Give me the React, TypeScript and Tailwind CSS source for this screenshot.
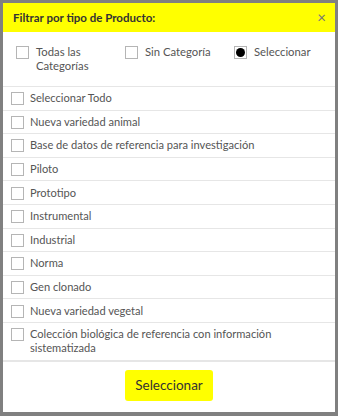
import React from "react";

const items = [
  "Seleccionar Todo",
  "Nueva variedad animal",
  "Base de datos de referencia para investigación",
  "Piloto",
  "Prototipo",
  "Instrumental",
  "Industrial",
  "Norma",
  "Gen clonado",
  "Nueva variedad vegetal",
  "Colección biológica de referencia con información sistematizada",
];

function Box() {
  return <span className="mt-[1px] block h-[13px] w-[13px] shrink-0 border border-[#b5b5b5] bg-white" />;
}

export default function App() {
  return (
    <div
      className="relative h-[416px] w-[338px] overflow-hidden bg-[#808080] pl-[3px] pt-[3px]"
      style={{ fontFamily: 'Lato, "Open Sans", sans-serif' }}
    >
      <div className="flex h-[409px] w-[332px] flex-col bg-white">
        <div className="flex h-[29px] shrink-0 items-center justify-between bg-[#ffff00] pl-[10px] pr-[9px]">
          <span className="text-[11.5px] font-bold text-[#333]">Filtrar por tipo de Producto:</span>
          <span className="text-[15px] leading-none text-[#777]">×</span>
        </div>
        <div className="grid h-[55px] shrink-0 grid-cols-[109px_109px_109px] border-b border-[#e6e6e6] pl-[13px] pt-[13px] text-[11.3px] leading-[14px] text-[#555]">
          <div className="flex gap-[7px]">
            <Box />
            <div className="flex flex-col">
              <span className="leading-[14px]">Todas las</span>
              <span className="leading-[14px]">Categorías</span>
            </div>
          </div>
          <div className="flex gap-[7px]">
            <Box />
            <span>Sin Categoría</span>
          </div>
          <div className="flex gap-[7px]">
            <span className="mt-[1px] flex h-[13px] w-[13px] shrink-0 items-center justify-center border border-[#b5b5b5] bg-white">
              <span className="block h-[9px] w-[9px] rounded-full bg-black" />
            </span>
            <span>Seleccionar</span>
          </div>
        </div>
        <div className="flex flex-col border-b-2 border-[#e6e6e6]">
          {items.map((t, i) => (
            <div
              key={i}
              className={`flex gap-[6px] pl-[8px] pr-[10px] py-[4.3px] text-[11.1px] leading-[14px] text-[#555] ${
                i < items.length - 1 ? "border-b border-[#e6e6e6]" : ""
              }`}
            >
              <Box />
              <span>{t}</span>
            </div>
          ))}
        </div>
        <div className="flex flex-1 items-start justify-center pt-[8px]">
          <button className="h-[31px] w-[88px] rounded-[3px] bg-[#ffff00] text-[13.5px] text-[#333]">
            Seleccionar
          </button>
        </div>
      </div>
    </div>
  );
}
